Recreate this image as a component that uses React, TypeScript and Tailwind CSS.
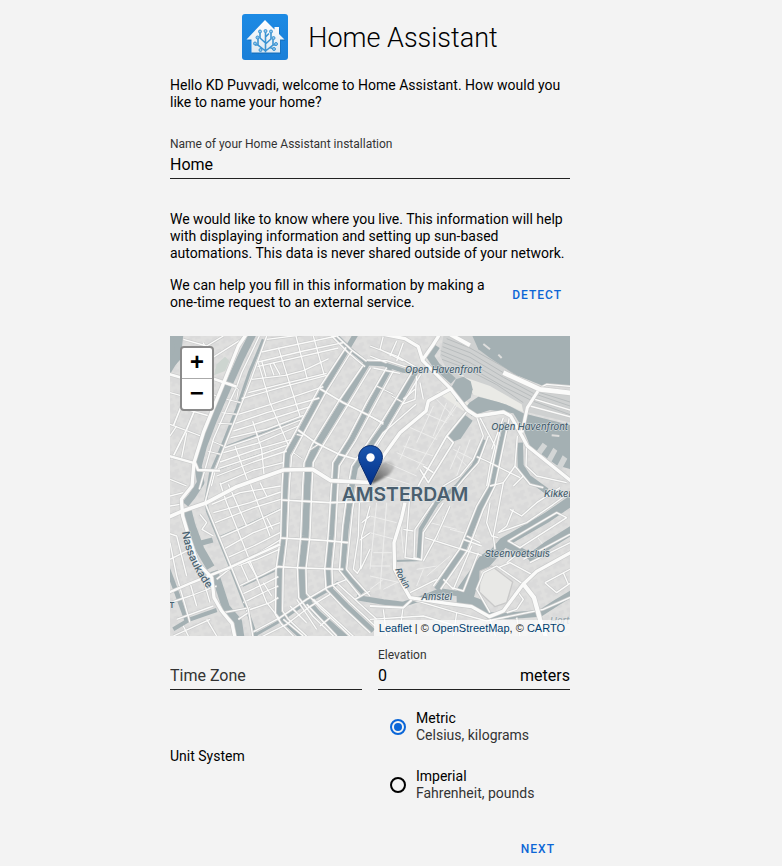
import { useState } from 'react';

interface Stroke {
    d: string;
    w: number;
}

// Canals, in map units (1200 x 900)
const CANALS: Stroke[] = [
    { d: 'M250 -10L215 60L172 155L130 252L100 330L84 390L92 440L66 480L46 505', w: 22 },
    { d: 'M52 525L64 570L90 640L122 695', w: 26 },
    { d: 'M132 705L150 760L168 815L204 856L212 910', w: 24 },
    { d: 'M22 -10L24 50L8 80L-10 110', w: 22 },
    { d: 'M280 10L238 110L200 220L150 345L122 410L108 490L112 525L135 580L180 690L232 825L262 910', w: 9 },
    { d: 'M90 622L128 612', w: 16 },
    { d: 'M-6 700L20 770L52 858', w: 14 },
    { d: 'M10 880L60 850L140 822', w: 12 },
    { d: 'M490 -10L540 40L592 82L640 84L700 104L742 110', w: 13 },
    { d: 'M560 -10L525 50L460 160L395 280L352 355L346 450L340 600L328 700L326 828L344 856L404 910', w: 16 },
    { d: 'M590 82L520 200L440 330L416 380L412 450L406 600L396 700L398 780L440 830L530 910', w: 20 },
    { d: 'M660 95L600 205L545 310L498 385L494 450L484 600L474 700L476 755L530 810L610 885', w: 15 },
    { d: 'M740 100L690 190L640 275L590 345L556 395L546 450L528 580L518 700L580 770', w: 16 },
    { d: 'M800 30L780 60L800 90L850 135', w: 22 },
    { d: 'M945 312L910 390L860 450L800 500L752 580L746 668', w: 12 },
    { d: 'M1010 260L985 360L968 450L930 515L880 640L800 760', w: 17 },
    { d: 'M1050 320L1052 390L1075 425L1130 465', w: 18 },
    { d: 'M1210 490L1130 545L1000 620L940 690L890 780', w: 30 },
    { d: 'M1210 580L1130 630L1075 670', w: 26 },
    { d: 'M1000 620L1080 660', w: 22 },
    { d: 'M560 785L640 798L700 805L760 785L810 765L880 775', w: 16 },
    { d: 'M870 778L930 800L955 838L1010 840L1110 832L1160 800L1210 770', w: 20 },
    { d: 'M676 675L760 672', w: 6 },
    { d: 'M250 900L330 855L408 800L475 762L505 738', w: 9 },
    { d: 'M150 602L235 565L330 520', w: 5 },
    { d: 'M218 750L320 702', w: 5 },
    { d: 'M170 330L250 300L395 248', w: 5 },
    { d: 'M140 402L240 365L350 328', w: 5 },
];

const WATER = [
    'M905 -5L1205 -5L1205 150L1120 150L1040 118L960 66L925 40Z',
    'M845 152L858 130L880 122L902 136L908 160L902 185L880 202L860 196Z',
    'M884 220L898 200L925 182L985 198L1010 206L1060 232L1205 268L1205 400L1160 388L1080 330L1060 280L1030 232L960 222L905 240Z',
    'M834 296L884 236L908 254L872 308L846 318Z',
    'M-5 -5L40 -5L32 70L-5 110Z',
    'M860 760L930 660L960 640L930 720L910 790L960 830L860 800Z',
];

const MAJOR: Stroke[] = [
    { d: 'M232 -10L205 30L165 130L100 290L72 380L66 450L34 490L38 540L56 600L82 680L125 725L132 785L155 825L186 862L196 910', w: 10 },
    { d: 'M-10 546L40 524L110 500L200 452L340 402L428 400L482 434L610 440', w: 11 },
    { d: 'M-10 358L76 382L84 402L140 404L150 404', w: 7 },
    { d: 'M-10 112L38 126L130 128L200 152', w: 8 },
    { d: 'M640 -5L705 8L745 32L758 74L842 158L775 195L768 225L690 290L640 360L600 435', w: 10 },
    { d: 'M842 158L892 222L920 240L1000 228L1022 240L1056 300L1072 330L1210 440', w: 10 },
    { d: 'M812 -10L790 25L756 74', w: 10 },
    { d: 'M1104 165L1072 215L1056 290', w: 9 },
    { d: 'M1000 110L1110 160L1210 172', w: 14 },
    { d: 'M840 -5L900 28', w: 12 },
    { d: 'M600 470L640 455L690 452', w: 5 },
    { d: 'M705 500L695 545L672 620L674 700L700 750L720 785L830 802L905 812L958 842L1000 825L1060 744L1100 706L1210 645', w: 10 },
    { d: 'M1060 744L1092 785L1110 850L1130 910', w: 13 },
    { d: 'M-10 772L60 742L180 694L330 625', w: 7 },
    { d: 'M130 402L105 500L150 610L235 820L250 910', w: 4 },
    { d: 'M600 810L700 815L725 792', w: 6 },
];

const MINOR: Stroke[] = [
    // Western edge
    { d: 'M100 20L120 70L230 0', w: 4 },
    { d: 'M40 10L110 30L160 0', w: 4 },
    { d: 'M100 160L50 280L5 370M66 130L10 270', w: 5 },
    { d: 'M0 170L30 178M0 265L92 300M60 150L140 180M30 215L118 240', w: 4 },
    { d: 'M50 290L34 370M0 300L20 270M0 430L50 450', w: 4 },
    // Between the canal and the Jordaan
    { d: 'M268 0L215 110L200 152L180 195L130 310L105 400L88 460', w: 4 },
    { d: 'M290 0L245 125L212 210L172 310L136 402L124 450', w: 4 },
    { d: 'M170 190L212 200M155 230L200 235M145 262L186 264M125 315L160 330M112 345L152 355M176 140L205 160L200 190', w: 3 },
    // Jordaan, crossing streets
    { d: 'M290 10L410 -5M275 48L330 36L500 0M264 78L400 45L520 20M262 92L330 76L505 36', w: 4 },
    { d: 'M245 130L345 118L400 104L476 68M215 188L330 155L470 118M235 170L330 146L470 112', w: 4 },
    { d: 'M205 235L300 206L460 152M196 262L290 230L448 186M190 285L285 255L420 212M182 305L290 280L400 238', w: 4 },
    { d: 'M165 335L270 300L392 252M160 350L262 322L385 270M150 378L260 340L365 310M144 398L260 360L350 328', w: 4 },
    { d: 'M140 420L250 378L350 345M150 445L250 402L340 380M240 435L335 400', w: 4 },
    { d: 'M265 80L300 200L355 328M325 35L390 240M378 0L412 130M430 0L462 115', w: 4 },
    { d: 'M248 255L275 340L282 415M195 330L235 440M275 75L288 122M300 85L312 118M310 80L330 116', w: 4 },
    { d: 'M150 440L170 500L250 700L290 800L330 850M240 440L300 600M175 445L230 570', w: 4 },
    { d: 'M125 505L210 470L332 450M130 530L240 500L332 468M135 560L250 515L332 490M150 605L240 565L332 520', w: 4 },
    { d: 'M160 640L250 590L330 560M172 665L250 630L330 590M180 690L260 655L330 612M200 690L260 670L328 640', w: 4 },
    { d: 'M208 750L280 715L325 692M215 775L290 740L325 722M220 800L290 765L325 750M228 825L300 800L325 785', w: 4 },
    { d: 'M210 680L235 735M230 670L262 725M290 545L308 580M280 740L305 780M270 440L290 480', w: 4 },
    // Canal quays
    { d: 'M528 34L448 155L380 280L342 350L336 450L332 600L318 700L316 835L335 865L380 910', w: 4 },
    { d: 'M545 45L470 165L405 285L365 360L358 450L352 600L340 700L338 825L355 850L420 910', w: 4 },
    { d: 'M578 90L506 195L426 325L402 380L398 450L392 600L382 700L386 785L428 840L500 910', w: 4 },
    { d: 'M602 95L535 205L455 335L430 380L426 450L420 600L408 700L410 772L455 820L545 905', w: 4 },
    { d: 'M650 95L590 198L535 305L488 380L484 450L474 600L464 700L468 760L520 815L600 890', w: 4 },
    { d: 'M670 105L612 212L556 315L508 390L504 450L496 600L486 700L488 748L540 800L615 870', w: 4 },
    { d: 'M728 105L680 185L628 268L545 390L534 450L518 570L508 704L570 780', w: 4 },
    { d: 'M752 115L700 200L652 280L620 330M560 450L548 520L530 700L550 725L600 780', w: 4 },
    { d: 'M500 0L545 42L590 76M480 -5L535 50L585 92', w: 4 },
    { d: 'M590 72L650 74L705 92L740 96M610 96L690 112', w: 4 },
    // Bridges
    { d: 'M450 158L520 200L600 240L640 262M384 282L440 322L510 356L560 370', w: 5 },
    { d: 'M333 492L410 496L480 500L600 496M330 606L410 610L470 614L535 620M322 692L400 696L520 700', w: 5 },
    { d: 'M370 350L395 368M380 295L400 300M415 345L445 325', w: 3 },
    { d: 'M245 890L330 845L410 790L470 755L530 730M260 910L350 865L415 815L480 775', w: 4 },
    { d: 'M340 850L400 900M410 805L500 900M430 790L560 910M500 740L620 850M555 790L600 765', w: 4 },
    { d: 'M380 790L440 880M360 810L410 860M450 870L480 845', w: 4 },
    // Singel side
    { d: 'M568 500L565 600L550 700L562 712L572 695L575 600L600 510M600 540L575 560M600 590L570 612M600 640L572 700', w: 4 },
    { d: 'M600 30L680 60L740 95M640 0L630 40L700 75M600 60L650 80M680 15L660 60M700 20L680 75', w: 4 },
    { d: 'M740 120L735 190L695 205M735 160L700 190M738 205L640 290L600 350M750 140L760 190', w: 4 },
    { d: 'M600 240L640 265M665 180L700 200M620 150L670 175', w: 3 },
    // Old centre
    { d: 'M892 224L830 300L790 370L750 440L740 460M830 300L850 320L800 400L775 440L750 400M760 390L790 410', w: 5 },
    { d: 'M920 242L940 300L910 370L870 420L820 450M955 300L925 380L880 430L860 455', w: 4 },
    { d: 'M930 245L975 330L960 390L950 450M920 362L950 375L1050 425M1000 245L965 340', w: 4 },
    { d: 'M1018 245L1000 330L975 450L940 520L895 640L812 760M995 260L955 450L920 510L868 640L790 750', w: 4 },
    { d: 'M1042 300L1035 390L1080 445L1120 455M1070 330L1068 390L1100 420L1190 440', w: 4 },
    { d: 'M1035 390L1000 440L960 450M1060 420L1030 450', w: 4 },
    { d: 'M790 500L735 580L732 665L755 672L760 590L820 500M720 470L705 665L755 672', w: 4 },
    { d: 'M840 510L800 600L760 675M765 605L860 635L935 658M700 580L730 585', w: 4 },
    { d: 'M880 610L935 630M890 600L930 620M905 630L850 760M925 650L880 765L845 755M850 760L820 730', w: 4 },
    { d: 'M960 500L950 560L965 600L985 605M1000 440L970 600L975 640M1030 520L1010 570L985 590', w: 4 },
    { d: 'M1020 520L1055 540L1100 500L1170 455M985 590L1070 560L1150 505L1205 465', w: 4 },
    { d: 'M1015 615L1160 530L1190 545L1050 635ZM1060 670L1200 595M1080 680L1210 615', w: 4 },
    { d: 'M940 710L980 690L1060 745M985 695L1020 680L1085 715M1010 680L1035 660M960 830L920 760L940 710', w: 4 },
    { d: 'M1045 770L1060 790L1040 820L1010 830M1125 740L1160 770L1210 735M1125 740L1200 700M1180 710L1195 745', w: 4 },
    { d: 'M725 790L860 830L950 855L1120 820L1210 780M720 770L800 730', w: 4 },
    { d: 'M600 850L760 840L860 870L1000 880M700 810L690 880M860 830L850 900M960 850L980 910M640 820L650 900M1040 845L1050 900', w: 4 },
    { d: 'M1110 155L1130 145L1210 152M1080 210L1210 245M1095 190L1210 225', w: 4 },
    // South west
    { d: 'M-10 590L20 600L50 720M0 480L40 470M0 510L30 505M0 620L20 720L60 860M60 740L80 810M100 730L120 800', w: 4 },
    { d: 'M0 670L60 640M0 800L60 780L140 750M20 850L130 810M10 900L120 850M110 850L140 900M40 870L60 910', w: 4 },
    { d: 'M90 535L110 560L96 580L130 600M140 730L190 690M160 830L240 815M205 850L235 830', w: 4 },
];

const LANES = [
    'M700 330L790 360M680 350L770 390M720 300L690 370M790 210L740 320M830 200L790 300M760 230L830 260',
    'M800 190L850 240M650 380L740 420M710 270L800 310M860 210L810 280M640 420L720 445M870 180L740 400',
    'M600 540L680 560M600 590L675 610M610 650L670 650M620 500L600 700M650 500L630 760M600 720L690 740',
    'M640 760L700 730M600 690L660 690M600 760L640 730M690 540L700 650M780 560L860 580M820 540L800 620',
    'M850 340L930 380M870 330L840 400M860 360L900 400M900 310L860 420M990 290L1000 350M1100 600L1130 640',
    'M740 700L800 690M760 700L740 750M770 720L840 660M840 580L920 600M1150 340L1200 370',
];

// Tracks that lead into the central station
const TRACKS = [
    'M820 20L900 50L1000 110L1090 160',
    'M818 32L900 64L1000 124L1090 172L1200 210',
    'M812 44L900 80L1000 138L1090 184L1200 224',
    'M814 56L900 94L1000 152L1090 196L1200 236',
    'M816 70L880 94L980 146L1060 200',
    'M830 8L900 36L1010 98L1110 170L1200 198',
];

function Streets({ items }: { items: Stroke[] }) {
    return (
        <>
            {items.map((s) => (
                <path key={'c' + s.d} d={s.d} stroke="#cacbcb" strokeWidth={s.w + 4} />
            ))}
            {items.map((s) => (
                <path key={'f' + s.d} d={s.d} stroke="#fbfbfa" strokeWidth={s.w} />
            ))}
        </>
    );
}

function MapTiles() {
    return (
        <svg
            viewBox="0 0 1200 900"
            preserveAspectRatio="xMidYMid slice"
            className="absolute inset-0 h-full w-full"
            fill="none"
            strokeLinejoin="round"
            aria-label="Map of Amsterdam"
        >
            <defs>
                <pattern id="blocks" width="46" height="38" patternUnits="userSpaceOnUse" patternTransform="rotate(-18)">
                    <rect width="46" height="38" fill="#dfdfde" />
                    <path d="M4 5h12v6h10v-5h14v11h-7v9h7v8H24v-7h-9v6H4v-9h6v-7H4z" fill="#dadada" />
                </pattern>
                <path id="nassaukade" d="M36 588C44 640 66 700 118 766" />
                <path id="rokin" d="M676 700C684 730 700 754 728 782" />
            </defs>
            <rect width="1200" height="900" fill="url(#blocks)" />
            <path d="M140 85L165 62L178 75L165 105L132 118Z" fill="#cdd5d0" />
            <path d="M820 0L910 0L960 60L1040 118L1120 160L1210 180L1210 262L1060 226L900 172L840 120L810 60Z" fill="#cfd1d1" />
            <path d="M862 116L960 150L1055 205L1060 228L1010 206L910 176L880 118ZM800 168L846 158L900 205L880 225Z" fill="#eaeae6" />
            {TRACKS.map((d) => (
                <path key={d} d={d} stroke="#b9bdbe" strokeWidth="3" />
            ))}
            {LANES.map((d) => (
                <path key={d} d={d} stroke="#eeeeed" strokeWidth="3" />
            ))}
            {WATER.map((d) => (
                <path key={d} d={d} fill="#a4b0b3" />
            ))}
            {CANALS.map((c) => (
                <path key={c.d} d={c.d} stroke="#a4b0b3" strokeWidth={c.w} />
            ))}
            <path d="M930 705L965 690L1028 738L1010 800L975 812L928 768Z" fill="#e8e8e6" stroke="#c9c9c9" strokeWidth="4" />
            <path d="M1100 345L1118 320L1132 330L1112 358ZM1130 370L1150 335L1162 344L1144 378ZM1160 392L1178 358L1192 368L1174 402Z" fill="#d3d6d6" />
            <path d="M940 24L960 40M985 56L995 66M1145 298L1168 300" stroke="#dededd" strokeWidth="6" />
            <Streets items={MINOR} />
            <Streets items={MAJOR} />
            <g
                fill="#47606f"
                stroke="#dfe3e4"
                strokeWidth="3"
                paintOrder="stroke"
                fontFamily="Inter, 'Open Sans', sans-serif"
                fontSize="28"
                fontWeight="500"
                fontStyle="italic"
            >
                <text x="705" y="111">Open Havenfront</text>
                <text x="964" y="282">Open Havenfront</text>
                <text x="1122" y="482">Kikkerbilssluis</text>
                <text x="944" y="664">Steenvoetsluis</text>
                <text x="754" y="792">Amstel</text>
                <text x="1140" y="864" fill="#9aa5ab">Hortus</text>
                <text fontSize="26"><textPath href="#rokin">Rokin</textPath></text>
                <text fontSize="32" fontStyle="normal"><textPath href="#nassaukade">Nassaukade</textPath></text>
                <text x="-2" y="817" fontStyle="normal" fontWeight="600" fontSize="24">T</text>
            </g>
            <text
                x="515"
                y="494"
                fill="#4a5f6f"
                stroke="#dfe3e4"
                strokeWidth="4"
                paintOrder="stroke"
                fontFamily="Inter, 'Open Sans', sans-serif"
                fontWeight="600"
                fontSize="58"
            >
                AMSTERDAM
            </text>
        </svg>
    );
}

function Marker() {
    return (
        <svg viewBox="0 0 50 41" className="absolute left-1/2 top-[109px] -ml-3 h-[41px] w-[50px]" aria-label="Home location">
            <defs>
                <linearGradient id="pin" x1="0" y1="0" x2="0" y2="1">
                    <stop offset="0" stopColor="#1a56ae" />
                    <stop offset="1" stopColor="#03318a" />
                </linearGradient>
                <linearGradient id="shade" x1="0" y1="1" x2="1" y2="0">
                    <stop offset="0" stopColor="#000" stopOpacity="0.7" />
                    <stop offset="1" stopColor="#000" stopOpacity="0.05" />
                </linearGradient>
                <filter id="soft">
                    <feGaussianBlur stdDeviation="1.2" />
                </filter>
            </defs>
            <path d="M12 40L22 20C29 14 38 16 36 23C34 30 22 35 12 40Z" fill="url(#shade)" filter="url(#soft)" />
            <path
                d="M12.500 .600C5.900 .600 .600 5.900 .600 12.400C.600 15.200 1.800 18 3 20.300L12.500 40L22 20.300C23.200 18 24.400 15.200 24.400 12.400C24.400 5.900 19.100 .600 12.500 .600Z"
                fill="url(#pin)"
                stroke="#0b2d70"
            />
            <circle cx="12.500" cy="12.500" r="4.200" fill="#fff" />
        </svg>
    );
}

function Logo() {
    return (
        <svg viewBox="0 0 46 46" className="h-[46px] w-[46px]" fill="none" aria-hidden="true">
            <defs>
                <linearGradient id="wall" x1="0" y1="0" x2="0" y2="1">
                    <stop offset="0" stopColor="#fff" />
                    <stop offset="1" stopColor="#dfe9f1" />
                </linearGradient>
                <linearGradient id="tile" x1="0" y1="0" x2="0" y2="1">
                    <stop offset="0" stopColor="#1c8ae4" />
                    <stop offset="1" stopColor="#1a7fd8" />
                </linearGradient>
            </defs>
            <rect width="46" height="46" rx="3" fill="url(#tile)" />
            <path d="M10 40V27H6L23.500 8L33 17V14.500H38V21L43.500 27H39V40Z" fill="#1265ac" opacity="0.5" />
            <path d="M9.500 38.500V25.500H4.500L23 6L32.500 15.500V13H37V20L42.500 25.500H38V38.500Z" fill="url(#wall)" />
            <g stroke="#3c94d2" strokeWidth="1.600">
                <path d="M23.500 38.500V18M23.500 37L16 31V24M16 31H13M23.500 29L18 24V18M23.500 37L31 31V25M31 31H34M23.500 30L29 25V18M23.500 23L27 19.500M19 33.500V36M28 33.500L32 35" />
            </g>
            <g fill="#8cc4ea" stroke="#3c94d2">
                <circle cx="23.500" cy="17" r="1.500" />
                <circle cx="18" cy="17.500" r="1.500" />
                <circle cx="29" cy="17.500" r="1.500" />
                <circle cx="15.500" cy="23.500" r="1.500" />
                <circle cx="31.500" cy="24" r="1.500" />
                <circle cx="13" cy="29.500" r="1.500" />
                <circle cx="34" cy="30" r="1.500" />
                <circle cx="18.500" cy="36" r="1.500" />
                <circle cx="32" cy="35" r="1.500" />
            </g>
        </svg>
    );
}

const UNITS = [
    { id: 'metric', name: 'Metric', hint: 'Celsius, kilograms' },
    { id: 'imperial', name: 'Imperial', hint: 'Fahrenheit, pounds' },
];

export default function App() {
    const [homeName, setHomeName] = useState('Home');
    const [timeZone, setTimeZone] = useState('');
    const [elevation, setElevation] = useState('0');
    const [unit, setUnit] = useState('metric');

    return (
        <div className="min-h-screen bg-[#f3f3f3] pr-[42px] font-['Roboto',sans-serif] text-sm leading-[17px] text-black">
            <main className="mx-auto max-w-[400px] pt-3.5">
                <header className="flex items-center justify-center gap-5">
                    <Logo />
                    <h1 className="pt-0.5 text-[27px] font-light leading-8">Home Assistant</h1>
                </header>

                <form onSubmit={(e) => e.preventDefault()}>
                    <p className="mt-[17px]">
                        Hello KD Puvvadi, welcome to Home Assistant. How would you like to name your home?
                    </p>

                    <div className="mt-[23px] border-b border-[#212121]">
                        <label htmlFor="name" className="block text-xs leading-5 text-[#333]">
                            Name of your Home Assistant installation
                        </label>
                        <input
                            id="name"
                            value={homeName}
                            onChange={(e) => setHomeName(e.target.value)}
                            className="block h-6 w-full bg-transparent pb-1 text-base leading-5 outline-none"
                        />
                    </div>

                    <p className="mt-8">
                        We would like to know where you live. This information will help with displaying information and
                        setting up sun-based automations. This data is never shared outside of your network.
                    </p>

                    <div className="mt-[15px] flex items-center justify-between">
                        <p className="w-80">
                            We can help you fill in this information by making a one-time request to an external service.
                        </p>
                        <button type="button" className="px-2 pb-1 pt-1.5 text-xs font-medium tracking-[1px] text-[#0b66d6]">
                            DETECT
                        </button>
                    </div>

                    <div className="relative mt-[25px] h-[300px] overflow-hidden">
                        <MapTiles />
                        <Marker />
                        <div className="absolute left-2.5 top-2.5 flex w-[34px] flex-col overflow-hidden rounded border-2 border-[#8a8a8a] bg-white font-['Liberation_Mono',monospace] text-2xl font-bold">
                            <button type="button" aria-label="Zoom in" className="h-[31px] border-b border-[#aaa] leading-8">
                                +
                            </button>
                            <button type="button" aria-label="Zoom out" className="h-[30px] leading-8">
                                −
                            </button>
                        </div>
                        <div className="absolute bottom-0 right-0 bg-white/70 px-[5px] font-['Liberation_Sans',sans-serif] text-[11px] leading-4 text-[#222]">
                            <a href="#leaflet" className="text-[#00406f]">Leaflet</a> | ©{' '}
                            <a href="#osm" className="text-[#00406f]">OpenStreetMap</a>, ©{' '}
                            <a href="#carto" className="text-[#00406f]">CARTO</a>
                        </div>
                    </div>

                    <div className="mt-[9px] grid grid-cols-2 items-end gap-4">
                        <div className="border-b border-[#212121]">
                            <input
                                id="zone"
                                aria-label="Time Zone"
                                placeholder="Time Zone"
                                value={timeZone}
                                onChange={(e) => setTimeZone(e.target.value)}
                                className="block h-6 w-full bg-transparent pb-1 text-base leading-5 outline-none placeholder:text-[#333]"
                            />
                        </div>
                        <div className="border-b border-[#212121]">
                            <label htmlFor="elevation" className="block text-xs leading-5 text-[#333]">
                                Elevation
                            </label>
                            <div className="flex h-6 pb-0.5 text-base leading-[22px]">
                                <input
                                    id="elevation"
                                    value={elevation}
                                    onChange={(e) => setElevation(e.target.value)}
                                    className="w-full min-w-0 bg-transparent outline-none"
                                />
                                <span>meters</span>
                            </div>
                        </div>
                    </div>

                    <div role="radiogroup" aria-labelledby="units" className="mt-5 grid grid-cols-2 items-center gap-4">
                        <span id="units">Unit System</span>
                        <div className="flex flex-col gap-6 pl-3">
                            {UNITS.map((u) => (
                                <label key={u.id} className="flex items-center gap-2.5">
                                    <input
                                        type="radio"
                                        name="unit"
                                        checked={unit === u.id}
                                        onChange={() => setUnit(u.id)}
                                        className="h-4 w-4 appearance-none rounded-full border-2 border-black p-0.5 checked:border-[#0a66d8] checked:bg-[#0a66d8] checked:bg-clip-content"
                                    />
                                    <span>
                                        <span className="block">{u.name}</span>
                                        <span className="block text-[#333]">{u.hint}</span>
                                    </span>
                                </label>
                            ))}
                        </div>
                    </div>

                    <div className="mt-[35px] flex justify-end">
                        <button type="submit" className="px-[15px] py-1 text-xs font-medium tracking-[1px] text-[#0b66d6]">
                            NEXT
                        </button>
                    </div>
                </form>
            </main>
        </div>
    );
}
